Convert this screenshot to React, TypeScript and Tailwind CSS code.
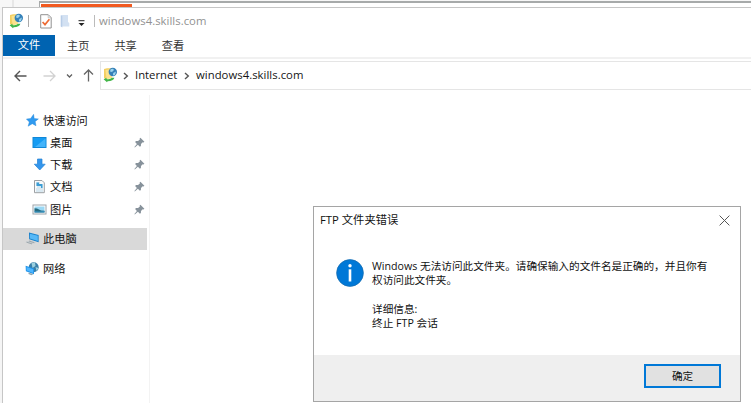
import React from 'react';

const sans = "font-['Open_Sans','Noto_Sans_CJK_SC',sans-serif]";

function SiteIcon() {
  return (
    <svg width="15" height="16" viewBox="0 0 15 16" className="shrink-0">
      <path d="M1 2 L4 1.2 L8 1.2 V11 L3 12 L1 11Z" fill="#f3cf62" />
      <path d="M2.5 3 L9 2 V11 L3.5 12Z" fill="#fbe28c" />
      <circle cx="9.8" cy="5" r="4.2" fill="#3581b9" />
      <path d="M7.6 2.2 Q10 .8 11 3 L9 5 7 4.5Z M10.2 6 L13 4.5 12 8 10 8.5Z" fill="#9bd3ed" />
      <path d="M.6 12.2 L3.5 10.8 V12 Q7 12.8 9 10.8 L11.4 10.8 Q10.5 14.2 4.6 14.2 L4 15.2Z" fill="#43b649" />
    </svg>
  );
}

function CheckIcon() {
  return (
    <svg width="12" height="15" viewBox="0 0 12 15" className="shrink-0">
      <path d="M.7 .7 H8.3 L11.2 3.6 V14 H.7Z" fill="#fff" stroke="#929292" />
      <path d="M8.2 1 V3.8 H11" fill="none" stroke="#b5b5b5" strokeWidth=".8" />
      <path d="M2.6 8 L5 10.6 9.4 5.3" fill="none" stroke="#ed6c35" strokeWidth="1.7" />
    </svg>
  );
}

function FolderIcon() {
  return (
    <svg width="10" height="14" viewBox="0 0 10 14" className="shrink-0">
      <path d="M.8 1 H8 V8 L9.3 9 V12.5 H.8Z" fill="#d3e1f2" />
      <path d="M.8 1.5 L2.3 2.2 V13.5 L.8 12.5Z" fill="#b8cde7" />
    </svg>
  );
}

function Pin() {
  return (
    <svg width="11" height="11" viewBox="0 0 11 11" className="shrink-0">
      <path d="M6.4 .8 L10.4 4.7 9.5 5.6 8.7 5.3 7 7.1 6.9 9.1 5.9 9.8 3.9 7.8 .8 10.5 .4 10 2.9 6.9 1.1 5 2 4.1 4.1 4.1 6 2.2 5.6 1.4Z" fill="#87929b" />
    </svg>
  );
}

const icons: Record<string, React.ReactNode> = {
  star: <path d="M8.6 1.3 L9.2 5.5 13.4 5.9 10.2 8.5 11 12.8 7.3 10.7 3.1 13.2 4.3 9 1.4 6.1 5.6 5.5Z" fill="#2f9af0" stroke="#2284d4" strokeWidth=".4" />,
  desktop: <><rect x="1" y="2.5" width="13" height="10" fill="#169cf3" stroke="#1187d7" /><path d="M3 12 L13.5 3.5 V12Z" fill="#43b3fa" /></>,
  download: <path d="M5.5 2 H10 V7.2 H13.2 L7.75 13 2.3 7.2 H5.5Z" fill="#3396ed" stroke="#2381d3" strokeWidth=".7" />,
  document: <><path d="M2.5 1.5 H10 L12.3 3.8 V13.7 H2.5Z" fill="#f8fafb" stroke="#9b9fa3" /><path d="M4 4 H8 M4 6 H10.5 M5 8 H11 M4 10 H11 M4 12 H11" stroke="#a7cde3" strokeWidth=".8" /><path d="M4.5 3.5 H7 V5 H10.5 V9 H9 V7 H4.5Z" fill="#3b9dd5" /></>,
  picture: <><rect x="1" y="3" width="13" height="9" fill="#fff" stroke="#9ca4aa" /><path d="M2.5 4.5 H12.5 V9 H2.5Z" fill="#9ad8f5" /><path d="M2.5 6.3 L5 6.4 9 8.6 12.5 8.7 V10.5 H2.5Z" fill="#266b80" /><path d="M2.5 9.3 L7 9.6 12.5 9 V10.6 H2.5Z" fill="#3592c1" /></>,
  computer: <><path d="M4 1.4 L13.6 3.9 V11.2 L4.2 8.2Z" fill="#1680cc" /><path d="M5 2.7 L12.8 4.8 V10 L5 7.6Z" fill="#56b8f7" /><path d="M.3 11 L5 9.2 11 11.3 6.5 13.2Z" fill="#c4cbd0" /><path d="M1.5 11.2 L7 12.9 M4 10 L9.3 11.8" stroke="#8e999f" strokeWidth=".7" /></>,
  network: <><circle cx="8.7" cy="6.2" r="5" fill="#397ea8" /><path d="M6.5 2 L10 1.5 10.5 5 7.5 7Z M10.5 6 L13.5 7 11.5 10Z" fill="#9bd0df" /><path d="M.6 4.7 L9 7.4 V13.2 L.9 10.3Z" fill="#1d91e7" /><path d="M1.5 6 L8.2 8.2 V11.9 L1.6 9.5Z" fill="#4eb6ff" /><path d="M3.5 11.7 V13 L6.5 14.2 8.5 13Z" fill="#8da4af" /></>,
};

function NavItem({ icon, label, nested = false }: { icon: string; label: string; nested?: boolean }) {
  return (
    <div className={`flex h-[22.25px] items-center text-[11.2px] leading-none text-[#111] ${nested ? 'pl-[29px]' : 'pl-[22px]'}`}>
      <svg width="15" height="15" viewBox="0 0 15 15" className="mr-[3px] shrink-0">{icons[icon]}</svg>
      <span className="whitespace-nowrap">{label}</span>
      {nested && <span className="ml-auto mr-[4px]"><Pin /></span>}
    </div>
  );
}

function Chevron() {
  return <svg width="6" height="8" viewBox="0 0 6 8" className="shrink-0"><path d="M1 1 L4.3 4 1 7" fill="none" stroke="#555" strokeWidth="1.4" /></svg>;
}

function AddressBar() {
  return (
    <div className="flex h-[34px] shrink-0">
      <div className="flex h-[29px] w-[97px] shrink-0 items-center pl-[11px]">
        <svg width="13" height="12" viewBox="0 0 13 12"><path d="M6 1 L1 6 6 11 M1 6 H12.5" fill="none" stroke="#555" strokeWidth="1.4" /></svg>
        <svg width="13" height="12" viewBox="0 0 13 12" className="ml-4"><path d="M7 1 L12 6 7 11 M12 6 H.5" fill="none" stroke="#d2d2d2" strokeWidth="1.3" /></svg>
        <svg width="7" height="6" viewBox="0 0 7 6" className="ml-[10px]"><path d="M1 1.5 L3.5 4 6 1.5" fill="none" stroke="#606060" strokeWidth="1.3" /></svg>
        <svg width="11" height="13" viewBox="0 0 11 13" className="ml-[10px]"><path d="M1 5.5 L5.5 1 10 5.5 M5.5 1 V12.5" fill="none" stroke="#666" strokeWidth="1.3" /></svg>
      </div>
      <div className="flex h-[29px] flex-1 items-center border border-r-0 border-[#e5e5e5] pl-[2px] text-[11.3px] text-[#151515]">
        <div className="pb-[2px]"><SiteIcon /></div>
        <span className="ml-[5px]"><Chevron /></span>
        <span className="ml-[6px] w-[42px] whitespace-nowrap">Internet</span>
        <span className="ml-[7px]"><Chevron /></span>
        <span className="ml-[6px] whitespace-nowrap tracking-[0.04px]">windows4.skills.com</span>
      </div>
    </div>
  );
}

function ErrorDialog() {
  return (
    <section className="absolute left-[313px] top-[206px] flex h-[196px] w-[428px] flex-col border border-[#a5a5a5] bg-white text-[#111]">
      <header className="flex h-[27px] shrink-0 items-center justify-between pl-[6px] pr-[10px] text-[11.3px]">
        <span className="whitespace-nowrap">FTP 文件夹错误</span>
        <svg width="11" height="11" viewBox="0 0 11 11"><path d="M.6 .6 L10.4 10.4 M10.4 .6 L.6 10.4" fill="none" stroke="#555" strokeWidth="1" /></svg>
      </header>
      <div className="flex flex-1 pl-[22px] pt-[25px]">
        <svg width="28" height="28" viewBox="0 0 28 28" className="shrink-0">
          <circle cx="14" cy="14" r="13.4" fill="#0078d7" stroke="#176cae" strokeWidth=".7" />
          <circle cx="14" cy="6.7" r="1.7" fill="#fff" /><path d="M12.7 10.3 H15.3 V22.5 H12.7Z" fill="#fff" />
        </svg>
        <div className="ml-[8px] whitespace-nowrap text-[10.65px] leading-[14.25px]">
          <p>Windows 无法访问此文件夹。请确保输入的文件名是正确的，并且你有</p>
          <p>权访问此文件夹。</p>
          <p className="mt-[14.25px]">详细信息:</p>
          <p>终止 FTP 会话</p>
        </div>
      </div>
      <footer className="flex h-[46px] shrink-0 items-start justify-end bg-[#efefef] pr-[19px] pt-[9px]">
        <button className="h-[24px] w-[77px] border-2 border-[#0078d7] bg-[#e1e1e1] text-[10.6px] leading-none">确定</button>
      </footer>
    </section>
  );
}

export default function App() {
  return (
    <main className={`relative flex h-[403px] w-[751px] flex-col overflow-hidden bg-[#f5f5f5] ${sans}`}>
      <div className="flex h-[7px] shrink-0 bg-[#f7f7f7]">
        <div className="ml-3 w-[2px] bg-[#e7e7e7]" />
        <div className="ml-[25px] mt-px flex-1 border-l border-t-2 border-[#a7aaaa] bg-white pl-px pt-px">
          <div className="h-[3px] w-[91px] bg-[#f15a20]" />
        </div>
      </div>
      <div className="ml-[2px] flex flex-1 flex-col border-l border-t border-[#c6c6c6] bg-white">
        <header className="flex h-[27px] shrink-0 items-center pl-[6px] pb-px">
          <SiteIcon />
          <span className="ml-[4px] h-3 w-px bg-[#aaa]" />
          <span className="ml-[11px]"><CheckIcon /></span>
          <span className="ml-[8px]"><FolderIcon /></span>
          <svg width="7" height="7" viewBox="0 0 7 7" className="ml-[8px] mt-1"><path d="M.5 .7 H6.5" stroke="#222" /><path d="M.5 3 H6.5 L3.5 6Z" fill="#222" /></svg>
          <span className="ml-[9px] h-3 w-px bg-[#bbb]" />
          <span className="ml-[4px] whitespace-nowrap text-[11.3px] tracking-[0.04px] text-[#929292]">windows4.skills.com</span>
        </header>
        <nav className="flex h-[24px] shrink-0 border-b-2 border-[#f1f1f1] text-[11.2px] text-[#333]">
          <span className="flex h-[21px] w-[52px] items-center justify-center bg-[#0063b1] text-white">文件</span>
          <span className="ml-[12px] flex h-[22px] items-center">主页</span>
          <span className="ml-[25px] flex h-[22px] items-center">共享</span>
          <span className="ml-[25px] flex h-[22px] items-center">查看</span>
        </nav>
        <div className="h-[2px] shrink-0" />
        <AddressBar />
        <div className="flex flex-1">
          <aside className="w-[147px] shrink-0 border-r border-[#f3f3f3] pt-[14px]">
            <NavItem icon="star" label="快速访问" />
            <NavItem icon="desktop" label="桌面" nested />
            <NavItem icon="download" label="下载" nested />
            <NavItem icon="document" label="文档" nested />
            <NavItem icon="picture" label="图片" nested />
            <div className="mr-[2px] mt-[7.5px] bg-[#d9d9d9]"><NavItem icon="computer" label="此电脑" /></div>
            <div className="mt-[7px]"><NavItem icon="network" label="网络" /></div>
          </aside>
        </div>
      </div>
      <ErrorDialog />
    </main>
  );
}
